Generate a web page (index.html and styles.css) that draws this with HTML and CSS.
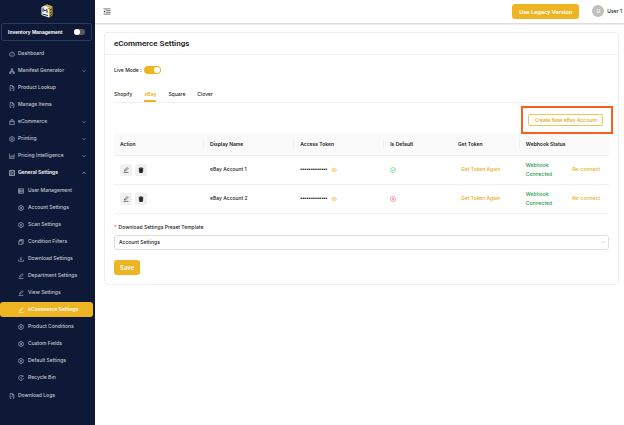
FILE: index.html
```html
<!DOCTYPE html>
<html lang="en">
<head>
  <meta charset="UTF-8">
  <title>eCommerce Settings</title>
  <link rel="stylesheet" href="styles.css">
</head>
<body>

<!-- Icons -->
<svg class="sprite">
  <symbol id="i-dash" viewBox="0 0 16 16"><path d="M3 13.500a6.500 6.500 0 1 1 10 0zM8 9.500l3-3M4 9h1M8 4.500v1"/></symbol>
  <symbol id="i-tree" viewBox="0 0 16 16"><path d="M6 2h4v4H6zM8 6v3M3.500 11V9h9v2M1.500 11h4v3.500h-4zM10.500 11h4v3.500h-4z"/></symbol>
  <symbol id="i-file" viewBox="0 0 16 16"><path d="M3 14.500v-13h6l4 4v9M9 1.500v4h4M3 14.500h3M10 14.500h3M6 9h4"/></symbol>
  <symbol id="i-bag" viewBox="0 0 16 16"><path d="M2 6h12v8.500H2zM5 8V4a3 3 0 0 1 6 0v4"/></symbol>
  <symbol id="i-gear" viewBox="0 0 16 16"><path d="M6 1.500h4l1 2 2.500 0 1.500 3-1 1.500 1 1.500-1.500 3H11l-1 2H6l-1-2H2.500L1 9.500 2 8 1 6.500l1.500-3H5z"/><circle cx="8" cy="8" r="2.500"/></symbol>
  <symbol id="i-chart" viewBox="0 0 16 16"><path d="M1.500 1.500v13h13M5 12V8M8 12V5M11 12V7M14 12V3"/></symbol>
  <symbol id="i-panel" viewBox="0 0 16 16"><path d="M1.500 1.500h13v13h-13zM4 5h4M10 5h2M4 8h2M8 8h4M4 11h5M11 11h1"/></symbol>
  <symbol id="i-list" viewBox="0 0 16 16"><path d="M1.500 2h13v12h-13zM1.500 6h13M1.500 10h13M5 2v12"/></symbol>
  <symbol id="i-copy" viewBox="0 0 16 16"><path d="M5 4V1.500h9V12h-2M2 6l3-2h6v10.500H2zM2 7h3V4"/></symbol>
  <symbol id="i-down" viewBox="0 0 16 16"><path d="M8 2v8M5.500 7.500L8 10l2.500-2.500M1.500 10v4h13v-4"/></symbol>
  <symbol id="i-edit" viewBox="0 0 16 16"><path d="M4 11l.500-3L11 1.500 13.500 4 7 10.500zM1.500 14.500h13"/></symbol>
  <symbol id="i-clock" viewBox="0 0 16 16"><path d="M13.500 4A6.500 6.500 0 1 0 14.500 8.500M13.500 1v3h-3M8 4.500V8.500l2.500 1.500"/></symbol>
  <symbol id="i-chev" viewBox="0 0 16 16"><path d="M2 5l6 6 6-6"/></symbol>
  <symbol id="i-trash" viewBox="0 0 16 16"><path d="M2 3h12M6 1.500h4M3 4h10l-1 11H4z"/></symbol>
  <symbol id="i-eye" viewBox="0 0 16 16"><path d="M1 8c3-6 11-6 14 0-3 6-11 6-14 0z"/><circle cx="8" cy="8" r="2.500"/></symbol>
  <symbol id="i-check" viewBox="0 0 16 16"><circle cx="8" cy="8" r="6.500"/><path d="M5 8l2.500 2.500L11 6"/></symbol>
  <symbol id="i-close" viewBox="0 0 16 16"><circle cx="8" cy="8" r="6.500"/><path d="M5.500 5.500l5 5M10.500 5.500l-5 5"/></symbol>
</svg>

<div class="layout">
  <!-- Sidebar -->
  <aside class="sidebar">
    <svg class="logo" viewBox="0 0 24 28">
      <path fill="#e9edf2" d="M1 6L12 1l11 4-10 5z"/>
      <path fill="#c9a02c" d="M7 3l11 5 5-3-11-4zM16 9l7-4v18l-7 4z"/>
      <path fill="#f4f6f8" d="M1 6l15 4v17L1 22z"/>
      <path fill="none" stroke="#1c2540" stroke-width="2" d="M4 16V9l4 5 4-3v7M3 20l11 3M18 12l4-2M18 18l4-2M18 23l4-2"/>
    </svg>
    <label class="inventory">
      Inventory Management
      <input type="checkbox" class="switch switch-sm">
    </label>
    <nav class="menu">
      <a href="#"><svg><use href="#i-dash"/></svg>Dashboard</a>
      <a href="#"><svg><use href="#i-tree"/></svg>Manifest Generator<svg class="chev"><use href="#i-chev"/></svg></a>
      <a href="#"><svg><use href="#i-file"/></svg>Product Lookup</a>
      <a href="#"><svg><use href="#i-file"/></svg>Manage Items</a>
      <a href="#"><svg><use href="#i-bag"/></svg>eCommerce<svg class="chev"><use href="#i-chev"/></svg></a>
      <a href="#"><svg><use href="#i-gear"/></svg>Printing<svg class="chev"><use href="#i-chev"/></svg></a>
      <a href="#"><svg><use href="#i-chart"/></svg>Pricing Intelligence<svg class="chev"><use href="#i-chev"/></svg></a>
      <a href="#" class="open"><svg><use href="#i-panel"/></svg>General Settings<svg class="chev"><use href="#i-chev"/></svg></a>
      <div class="submenu">
        <a href="#"><svg><use href="#i-list"/></svg>User Management</a>
        <a href="#"><svg><use href="#i-gear"/></svg>Account Settings</a>
        <a href="#"><svg><use href="#i-gear"/></svg>Scan Settings</a>
        <a href="#"><svg><use href="#i-copy"/></svg>Condition Filters</a>
        <a href="#"><svg><use href="#i-down"/></svg>Download Settings</a>
        <a href="#"><svg><use href="#i-edit"/></svg>Department Settings</a>
        <a href="#"><svg><use href="#i-edit"/></svg>View Settings</a>
        <a href="#" class="active"><svg><use href="#i-edit"/></svg>eCommerce Settings</a>
        <a href="#"><svg><use href="#i-gear"/></svg>Product Conditions</a>
        <a href="#"><svg><use href="#i-gear"/></svg>Custom Fields</a>
        <a href="#"><svg><use href="#i-gear"/></svg>Default Settings</a>
        <a href="#"><svg><use href="#i-clock"/></svg>Recycle Bin</a>
      </div>
      <a href="#"><svg><use href="#i-file"/></svg>Download Logs</a>
    </nav>
  </aside>

  <div class="content">
    <!-- Top bar -->
    <header class="topbar">
      <button class="fold" aria-label="Collapse menu">
        <svg viewBox="0 0 16 16"><path d="M0 2h16M6 6h10M6 10h10M0 14h16"/><path class="solid" d="M4 5v6L0 8z"/></svg>
      </button>
      <button class="btn legacy">Use Legacy Version</button>
      <span class="avatar">U</span>
      <span class="user">User 1</span>
    </header>

    <!-- Settings card -->
    <main class="card">
      <h1>eCommerce Settings</h1>
      <div class="card-body">
        <label class="live">Live Mode :<input type="checkbox" class="switch" checked></label>
        <nav class="tabs">
          <a href="#">Shopify</a>
          <a href="#" class="current">eBay</a>
          <a href="#">Square</a>
          <a href="#">Clover</a>
        </nav>
        <div class="toolbar">
          <div class="highlight"><button class="outline">Create New eBay Account</button></div>
        </div>
        <table>
          <thead>
            <tr>
              <th class="c-wide split">Action</th>
              <th class="c-wide split">Display Name</th>
              <th class="c-wide split">Access Token</th>
              <th class="c-mid">Is Default</th>
              <th class="c-mid split">Get Token</th>
              <th>Webhook Status</th>
            </tr>
          </thead>
          <tbody>
            <tr>
              <td><div class="actions"><button aria-label="Edit"><svg><use href="#i-edit"/></svg></button><button class="trash" aria-label="Delete"><svg><use href="#i-trash"/></svg></button></div></td>
              <td>eBay Account 1</td>
              <td><div class="token"><span>•••••••••••••</span><svg><use href="#i-eye"/></svg></div></td>
              <td><svg class="yes"><use href="#i-check"/></svg></td>
              <td><a href="#" class="get">Get Token Again</a></td>
              <td><div class="webhook"><span>Webhook Connected</span><a href="#">Re-connect</a></div></td>
            </tr>
            <tr>
              <td><div class="actions"><button aria-label="Edit"><svg><use href="#i-edit"/></svg></button><button class="trash" aria-label="Delete"><svg><use href="#i-trash"/></svg></button></div></td>
              <td>eBay Account 2</td>
              <td><div class="token"><span>•••••••••••••</span><svg><use href="#i-eye"/></svg></div></td>
              <td><svg class="no"><use href="#i-close"/></svg></td>
              <td><a href="#" class="get">Get Token Again</a></td>
              <td><div class="webhook"><span>Webhook Connected</span><a href="#">Re-connect</a></div></td>
            </tr>
          </tbody>
        </table>
        <label class="field-label" for="preset"><span class="req">*</span>Download Settings Preset Template</label>
        <div class="select">
          <select id="preset"><option>Account Settings</option></select>
          <svg><use href="#i-chev"/></svg>
        </div>
        <button class="btn save">Save</button>
      </div>
    </main>
  </div>
</div>

</body>
</html>
```
FILE: styles.css
```css
* {
  box-sizing: border-box;
}
body {
  margin: 0;
  font-family: Inter, "Liberation Sans", sans-serif;
  font-size: 5px;
  font-weight: 500;
  line-height: 9px;
  color: #222;
  background: #fff;
}
a {
  color: inherit;
  text-decoration: none;
}
button, select, input {
  font: inherit;
  margin: 0;
}
button {
  padding: 0;
  border: none;
  cursor: pointer;
}
svg {
  display: block;
  width: 6px;
  height: 6px;
  flex: none;
  fill: none;
  stroke: currentColor;
  stroke-width: 1.5;
}
.sprite {
  position: absolute;
  width: 0;
  height: 0;
}
.layout {
  display: flex;
  min-height: 100vh;
}

/* sidebar */
.sidebar {
  flex: none;
  width: 95px;
  padding: 4px 2px 0 0;
  background: #0e1938;
  color: #c3c7d1;
}
.logo {
  width: 12px;
  height: 14px;
  margin: 0 auto 5px;
  stroke: none;
}
.inventory {
  display: flex;
  align-items: center;
  justify-content: space-between;
  height: 18px;
  margin: 0 1px 5px 1px;
  padding: 0 6px;
  border: 1px solid #2b3859;
  border-radius: 2px;
  color: #fff;
  font-family: "Liberation Sans", sans-serif;
  font-weight: bold;
}
.menu, .submenu {
  display: flex;
  flex-direction: column;
  gap: 2px;
}
.submenu {
  margin: 1px 0;
}
.menu a {
  display: flex;
  align-items: center;
  gap: 3px;
  height: 15px;
  padding: 0 7px 0 9px;
  border-radius: 3px;
}
.menu .submenu a {
  padding-left: 18px;
  gap: 4px;
}
.menu .chev {
  width: 4px;
  height: 4px;
  margin-left: auto;
  stroke-width: 2;
}
.menu .open {
  color: #fff;
  font-weight: 600;
}
.open .chev {
  transform: rotate(180deg);
}
.menu .active {
  background: #eeb422;
  color: #fff;
  font-weight: 600;
}

/* switches */
.switch {
  appearance: none;
  display: flex;
  align-items: center;
  width: 17px;
  height: 8px;
  padding: 1px;
  border-radius: 4px;
  background: #5b5b5b;
}
.switch::before {
  content: "";
  width: 6px;
  height: 6px;
  border-radius: 50%;
  background: #fff;
}
.switch:checked {
  justify-content: flex-end;
  background: #eeb422;
}
.switch-sm {
  width: 11px;
  height: 6px;
  padding: 0;
}

/* top bar */
.content {
  flex: 1;
  min-width: 0;
}
.topbar {
  display: flex;
  align-items: center;
  height: 23px;
  padding: 0 2px 1px 8px;
  box-shadow: 0 1px 2px rgba(0, 0, 0, 0.2);
}
.fold {
  margin-right: auto;
  background: none;
  color: #333;
}
.fold svg {
  width: 8px;
  height: 7px;
}
.fold .solid {
  fill: currentColor;
  stroke: none;
}
.btn {
  height: 15px;
  border-radius: 3px;
  background: #eeb422;
  color: #fff;
  font-size: 6px;
  font-weight: 600;
}
.legacy {
  padding: 0 7px;
  font-family: Roboto, sans-serif;
}
.avatar {
  width: 12px;
  height: 12px;
  margin: 0 3px 0 13px;
  border-radius: 50%;
  background: #bfbfbf;
  color: #fff;
  line-height: 12px;
  text-align: center;
}

/* card */
.card {
  margin: 9px 5px 0 9px;
  border: 1px solid #f0f0f0;
  border-radius: 3px;
}
h1 {
  margin: 0;
  padding: 0 9px;
  border-bottom: 1px solid #f0f0f0;
  font-family: Roboto, sans-serif;
  font-size: 8px;
  line-height: 21px;
  font-weight: 600;
}
.card-body {
  padding: 10px 9px 9px;
}
.live {
  display: flex;
  align-items: center;
  gap: 2px;
  height: 10px;
}
.tabs {
  display: flex;
  gap: 12px;
  margin-top: 10px;
  border-bottom: 1px solid #f0f0f0;
}
.tabs a {
  padding: 5px 0 1px;
  border-bottom: 2px solid transparent;
}
.tabs .current {
  color: #eeb422;
  border-color: #eeb422;
  font-weight: 600;
}
.toolbar {
  display: flex;
  justify-content: flex-end;
  height: 31px;
  padding-top: 3px;
}
.highlight {
  display: flex;
  align-items: center;
  height: 28px;
  margin-right: -4px;
  padding: 0 8px 0 5px;
  border: 2px solid #f9601b;
}
.outline {
  height: 12px;
  padding: 0 5px;
  border: 1px solid #efc65c;
  border-radius: 2px;
  background: #fff;
  color: #e6a817;
  line-height: 10px;
}

/* accounts table */
table {
  width: 100%;
  border-collapse: collapse;
  table-layout: fixed;
}
th, td {
  padding: 0 6px;
  text-align: left;
  border-bottom: 1px solid #f0f0f0;
}
th {
  height: 21px;
  background: #fafafa;
  font-weight: 600;
}
.split {
  background: linear-gradient(#f0f0f0, #f0f0f0) right center / 1px 10px no-repeat #fafafa;
}
td {
  height: 29px;
}
.c-wide {
  width: 18.2%;
}
.c-mid {
  width: 13.7%;
}
.actions {
  display: flex;
  gap: 3px;
}
.actions button {
  display: grid;
  place-items: center;
  width: 12px;
  height: 12px;
  border-radius: 2px;
  background: #f0f0f0;
  color: #222;
}
.trash svg {
  fill: currentColor;
}
.token {
  display: flex;
  align-items: center;
  gap: 4px;
}
.token span {
  font-family: "Liberation Sans", sans-serif;
  font-size: 6px;
}
.token svg {
  color: #f0c455;
  stroke-width: 2;
}
.yes {
  color: #34c76a;
}
.no {
  color: #f5535f;
}
.get {
  padding-left: 3px;
}
.get, .webhook a {
  color: #e9ad20;
}
.webhook {
  display: flex;
  align-items: center;
  justify-content: space-between;
  padding-right: 3px;
  color: #16a34a;
}
.webhook span {
  width: 30px;
}

/* preset form */
.field-label {
  display: block;
  margin: 9px 0 3px;
}
.req {
  margin-right: 2px;
  color: #ff4d4f;
}
.select {
  display: grid;
  align-items: center;
}
.select select {
  grid-area: 1 / 1;
  appearance: none;
  width: 100%;
  height: 15px;
  padding: 0 4px;
  border: 1px solid #dedede;
  border-radius: 3px;
  background: #fff;
  color: #222;
}
.select svg {
  grid-area: 1 / 1;
  justify-self: end;
  margin-right: 3px;
  color: #bbb;
  pointer-events: none;
}
.save {
  display: block;
  margin-top: 10px;
  padding: 0 6px;
}
```
